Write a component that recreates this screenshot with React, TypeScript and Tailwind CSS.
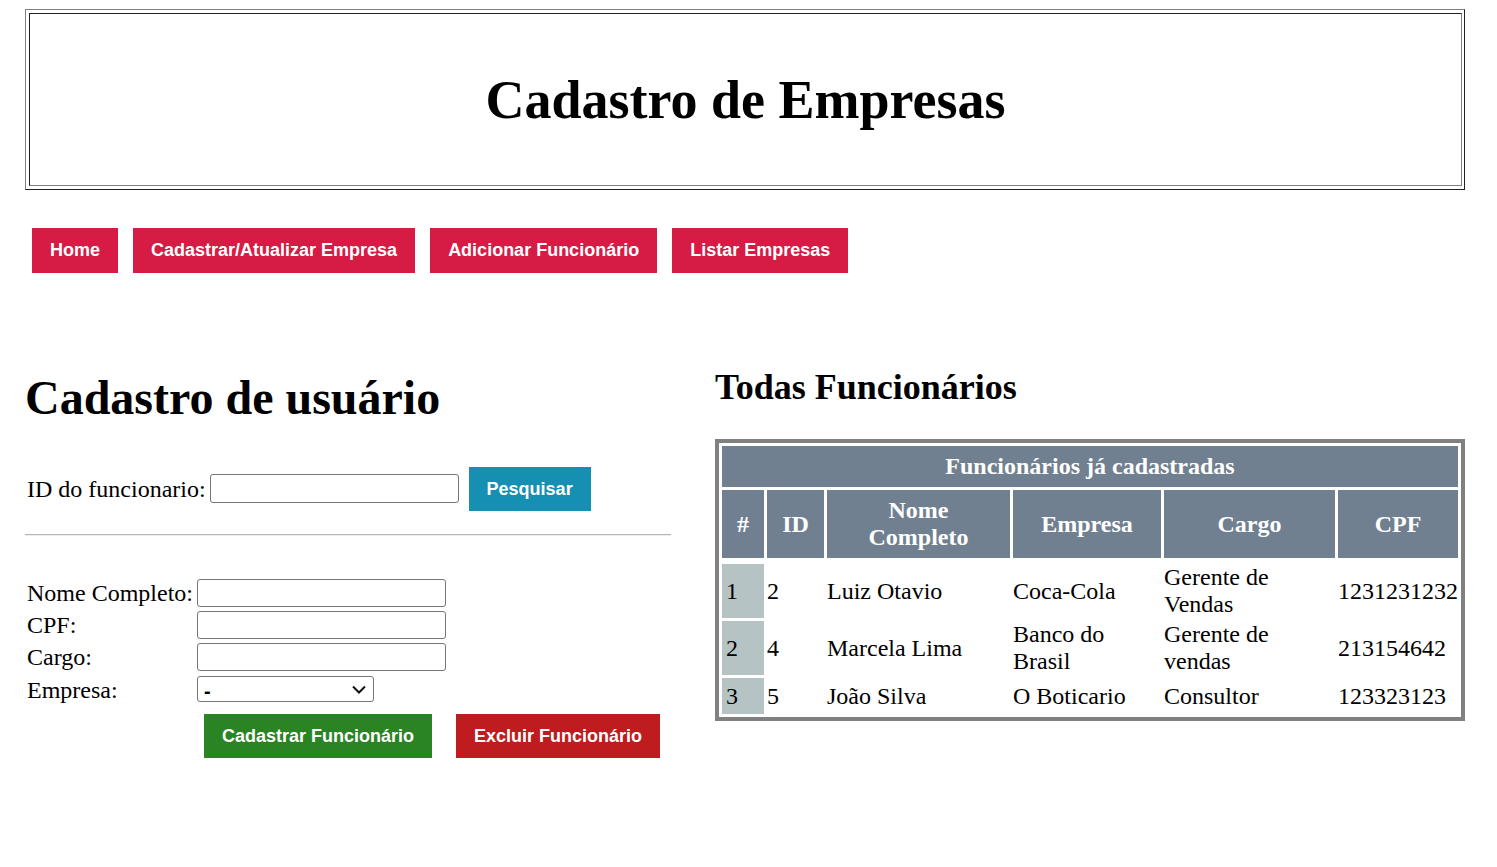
import React from 'react';

const navLinks = ['Home', 'Cadastrar/Atualizar Empresa', 'Adicionar Funcionário', 'Listar Empresas'];

const funcionarios = [
  { n: 1, id: 2, nome: 'Luiz Otavio', empresa: 'Coca-Cola', cargo: 'Gerente de Vendas', cpf: '1231231232' },
  { n: 2, id: 4, nome: 'Marcela Lima', empresa: 'Banco do Brasil', cargo: 'Gerente de vendas', cpf: '213154642' },
  { n: 3, id: 5, nome: 'João Silva', empresa: 'O Boticario', cargo: 'Consultor', cpf: '123323123' },
];

const inputCls =
  'h-[28px] w-[249px] rounded-[3px] border border-[#767676] bg-white px-1 text-[20px] font-["Liberation_Sans"]';

const App: React.FC = () => {
  return (
    <div className="min-h-screen bg-white px-[25px] pt-[9px] font-['Liberation_Serif',serif] text-black">
      {/* Header */}
      <div className="h-[181px] w-[1440px] border border-t-[#808080] border-l-[#808080] border-r-[#222] border-b-[#222] p-[3px] pr-[2px]">
        <div className="flex h-full items-center justify-center border border-t-[#222] border-l-[#222] border-r-[#808080] border-b-[#808080]">
          <h1 className="text-[54px] font-bold leading-none">Cadastro de Empresas</h1>
        </div>
      </div>

      {/* Nav */}
      <nav className="ml-[7px] mt-[38px] flex gap-[15px]">
        {navLinks.map((link) => (
          <button
            key={link}
            className="h-[45px] bg-[#d61c44] px-[18px] font-['Liberation_Sans',sans-serif] text-[18px] font-bold text-white"
          >
            {link}
          </button>
        ))}
      </nav>

      <div className="mt-[94px] flex gap-[44px]">
        {/* Left column */}
        <div className="w-[646px] pt-[3px]">
          <h1 className="text-[48px] font-bold leading-[55px]">Cadastro de usuário</h1>

          <div className="mt-[42px] flex items-center">
            <label className="ml-[2px] text-[24px] leading-none">ID do funcionario:</label>
            <input className="ml-[4px] -mt-[1px] h-[29px] w-[249px] rounded-[3px] border border-[#767676] px-1" />
            <button className="ml-[10px] h-[44px] w-[122px] bg-[#1690b2] font-['Liberation_Sans',sans-serif] text-[18px] font-bold text-white">
              Pesquisar
            </button>
          </div>

          <hr className="mt-[23px] border-t border-b border-t-[#b5b5b5] border-b-[#eeeeee]" />

          <div className="mt-[43px] grid grid-cols-[172px_auto] gap-y-[4px] text-[24px] leading-[28px]">
            <label className="pl-[2px]">Nome Completo:</label>
            <input className={inputCls} />
            <label className="pl-[2px]">CPF:</label>
            <input className={inputCls} />
            <label className="pl-[2px]">Cargo:</label>
            <input className={inputCls} />
            <label className="pl-[2px] pt-[1px]">Empresa:</label>
            <div className="relative mt-[1px] h-[26px] w-[177px]">
              <select className="h-full w-full appearance-none rounded-[3px] border border-[#767676] bg-white pl-[6px] font-['Liberation_Sans',sans-serif] text-[20px] font-bold">
                <option>-</option>
              </select>
              <svg
                className="pointer-events-none absolute right-[8px] top-[9px]"
                width="14"
                height="9"
                viewBox="0 0 14 9"
                fill="none"
              >
                <path d="M1 1.5 L7 7.5 L13 1.5" stroke="#111" strokeWidth="2" />
              </svg>
            </div>
          </div>

          <div className="ml-[179px] mt-[10px] flex gap-[24px] font-['Liberation_Sans',sans-serif] text-[18px] font-bold text-white">
            <button className="h-[44px] w-[228px] bg-[#2a8424]">Cadastrar Funcionário</button>
            <button className="h-[44px] w-[204px] bg-[#be1c1f]">Excluir Funcionário</button>
          </div>
        </div>

        {/* Right column */}
        <div className="w-[750px]">
          <h2 className="text-[36px] font-bold leading-[41px]">Todas Funcionários</h2>

          <table className="mt-[31px] w-[750px] table-fixed border-separate border-spacing-[3px] border-4 border-[#808080] text-[24px]">
            <colgroup>
              <col className="w-[42px]" />
              <col className="w-[57px]" />
              <col className="w-[183px]" />
              <col className="w-[148px]" />
              <col className="w-[171px]" />
              <col className="w-[120px]" />
            </colgroup>
            <thead className="text-white">
              <tr>
                <th colSpan={6} className="bg-[#708090] py-[7px] leading-[27px]">
                  Funcionários já cadastradas
                </th>
              </tr>
              <tr className="leading-[27px]">
                <th className="bg-[#708090] py-[7px]">#</th>
                <th className="bg-[#708090] py-[7px]">ID</th>
                <th className="bg-[#708090] py-[7px]">
                  <span className="inline-block w-[120px]">Nome Completo</span>
                </th>
                <th className="bg-[#708090] py-[7px]">Empresa</th>
                <th className="bg-[#708090] py-[7px]">Cargo</th>
                <th className="bg-[#708090] py-[7px]">CPF</th>
              </tr>
            </thead>
            <tbody className="leading-[27px]">
              <tr>
                <td colSpan={6} className="h-0 p-0" />
              </tr>
              {funcionarios.map((f) => (
                <tr key={f.n} className={f.n === 3 ? 'h-[36px]' : ''}>
                  <td className="bg-[#b6c3c4] px-[4px]">{f.n}</td>
                  <td className="px-0">{f.id}</td>
                  <td className="px-0">{f.nome}</td>
                  <td className="px-0">{f.empresa}</td>
                  <td className="px-0">{f.cargo}</td>
                  <td className="px-0">{f.cpf}</td>
                </tr>
              ))}
            </tbody>
          </table>
        </div>
      </div>
    </div>
  );
};

export default App;
